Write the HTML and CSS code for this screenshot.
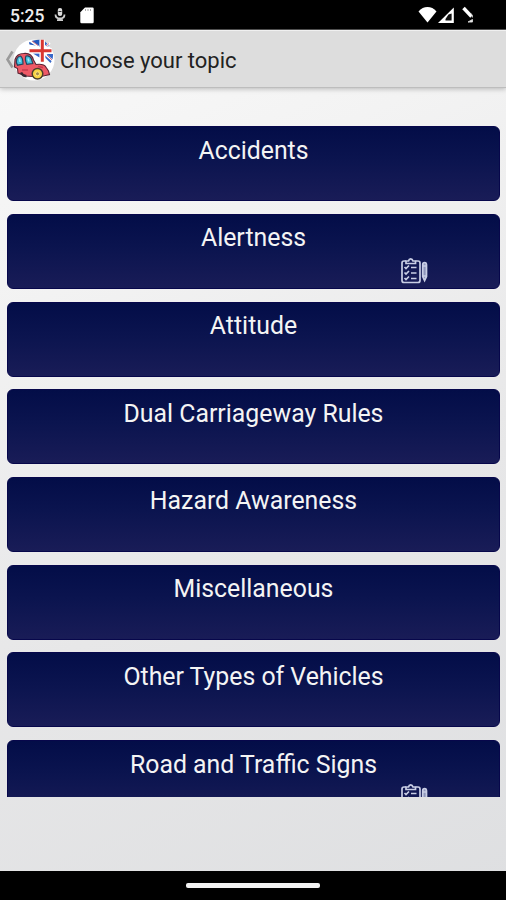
FILE: index.html
```html
<!DOCTYPE html>
<html lang="en">

<head>
    <meta charset="UTF-8">
    <meta name="viewport" content="width=device-width, initial-scale=1.0">
    <title>Choose your topic</title>
    <link rel="stylesheet" href="styles.css">
</head>

<body>
    <div class="screen">
        <div class="status-bar">
            <span class="clock">5:25</span>
            <svg class="mic-icon" width="12" height="16" viewBox="0 0 12 16">
                <rect x="3.8" y="0" width="4.4" height="8" rx="2" fill="#ddd" />
                <path d="M1.500 6.500c0 3 2 4 4.500 4s4.500-1 4.500-4M3 12.200h6" fill="none" stroke="#ccc" stroke-width="1.800" />
                <path d="M4.500 3.500h3" stroke="#333" />
            </svg>
            <svg class="card-icon" width="14" height="17" viewBox="0 0 14 17">
                <path d="M5 .5h7.500q1.200 0 1.200 1.200v13.300q0 1.200-1.200 1.200H1.500q-1.200 0-1.200-1.200V5.300z" fill="#fff" />
                <path d="M5.500 2v2M8 2v2M10.500 2v2" stroke="#aaa" />
            </svg>
            <svg class="signal-icons" width="58" height="18" viewBox="0 0 58 18">
                <path d="M.5 5.500C5.500-.4 13.500-.4 18.500 5.500L9.500 16.500z" fill="#fff" />
                <path d="M35.800 1.500v15.500H20z" fill="#fff" />
                <path d="M33.600 7.500v7h-6.100v-1.500l3-4.500z" fill="#111" />
                <path d="M45.500 2l8 8.500" stroke="#fff" stroke-width="3.400" />
                <path d="M53 7.500q2 2.500 1.300 4M50 16h4.500v-2.500z" fill="#fff" stroke="#ccc" stroke-width="1" />
            </svg>
        </div>

        <div class="header">
            <svg class="back" width="9" height="22" viewBox="0 0 9 22">
                <path d="M7.500 2.500L2.500 10.500l5 8" fill="none" stroke="#9a9a9a" stroke-width="2.600" />
            </svg>
            <svg class="logo" width="42" height="42" viewBox="0 0 42 42">
                <circle cx="21" cy="21" r="20.500" fill="#fff" />
                <!-- flag -->
                <path d="M16 3.500Q20 .7 26.500.7V8q-2-1-4-1.500l-6-1z" fill="#2558bd" />
                <path d="M32 2.500l4.500 4.500L32 8zM32 15l8 0q.5 5-2.500 9l-5-5zM20 14.500h6.500v4z" fill="#3767c8" />
                <path d="M17 2l9 6M40 22l-8-7M32 8l5-4" fill="none" stroke="#fff" stroke-width="2" />
                <path d="M19 2l6 4.500M34 16l5 5M33 7l3-2.500" stroke="#d87283" stroke-width="1" />
                <path d="M29.300.8v23M16 11.800h23" stroke="#fff" stroke-width="5" />
                <path d="M29.300.8v22M16.500 11.800h22" stroke="#d93631" stroke-width="3" />
                <!-- car -->
                <path d="M5 34L4.500 29.500 1.500 28 2 20.500Q4 14.500 10.500 14.500Q18.500 13.500 20.500 21l2.500 4.500q8-1 10 2.800l2.500 3.700 1 3.500-6 1.500-11 .5-7-.5z" fill="#ee5966" stroke="#5b2434" stroke-width="1.100" />
                <path d="M7.500 17q2.500 1.500 2.500 8l-5.500 1.200Q2.500 23 4 19.500 5.500 17 7.500 17zM13 17q4-1 5.500 3l1.300 4.500-6 .8Q11.500 20 13 17z" fill="#43bfdd" stroke="#27435c" stroke-width="1.200" />
                <path d="M6.500 19.500l.5 3.500M15 19.500l1 3" stroke="#a4e9f4" stroke-width="1.500" />
                <path d="M9 31h6M25 27.500l5 1" fill="none" stroke="#c63b50" stroke-width="1.300" />
                <path d="M8 33.500q2 4 5.500 3.500" fill="none" stroke="#3b2832" stroke-width="2.500" />
                <circle cx="24.500" cy="34.800" r="5.300" fill="#f9d344" stroke="#49402c" stroke-width="1.500" />
                <circle cx="24.500" cy="34.800" r="2" fill="#a58a4c" stroke="#ffe979" />
            </svg>
            <h1>Choose your topic</h1>
        </div>

        <div class="topic-list">
            <div class="topic">Accidents</div>
            <div class="topic">
                Alertness
                <svg class="checklist" width="28" height="28" viewBox="0 0 28 28">
                    <g fill="none" stroke="#c9cee5" stroke-width="1.700">
                        <path d="M6 4H4Q2 4 2 6v17.500q0 2 2 2h14q2 0 2-2V6q0-2-2-2H15.500" />
                        <path d="M6 6.500V4h2.500Q9 1.800 10.700 1.800T13 4h2.500v2.500z" />
                        <path d="M4.500 10l1.500 1.500 3-3M4.500 15.500L6 17l3-3M4.500 21L6 22.500l3-3M11 10.500h5.500M11 16h5.500M11 21.500h5.500" />
                        <path d="M22.700 8q0-2.500 1.900-2.500T26.500 8v11.500l-1.900 4-1.900-4zM22.500 9h4M22.500 19h4" fill="#8f96ba" />
                    </g>
                </svg>
            </div>
            <div class="topic">Attitude</div>
            <div class="topic">Dual Carriageway Rules</div>
            <div class="topic">Hazard Awareness</div>
            <div class="topic">Miscellaneous</div>
            <div class="topic">Other Types of Vehicles</div>
            <div class="topic">
                Road and Traffic Signs
                <svg class="checklist" width="28" height="28" viewBox="0 0 28 28">
                    <g fill="none" stroke="#c9cee5" stroke-width="1.700">
                        <path d="M6 4H4Q2 4 2 6v17.500q0 2 2 2h14q2 0 2-2V6q0-2-2-2H15.500" />
                        <path d="M6 6.500V4h2.500Q9 1.800 10.700 1.800T13 4h2.500v2.500z" />
                        <path d="M4.500 10l1.500 1.500 3-3M4.500 15.500L6 17l3-3M4.500 21L6 22.500l3-3M11 10.500h5.500M11 16h5.500M11 21.500h5.500" />
                        <path d="M22.700 8q0-2.500 1.900-2.500T26.500 8v11.500l-1.900 4-1.900-4zM22.500 9h4M22.500 19h4" fill="#8f96ba" />
                    </g>
                </svg>
            </div>
        </div>

        <div class="nav-bar">
            <div class="handle"></div>
        </div>
    </div>
</body>

</html>
```

FILE: styles.css
```css
body {
    font-family: Roboto, "Liberation Sans", sans-serif;
    margin: 0;
    padding: 0;
    background-color: #000;
}

.screen {
    display: flex;
    flex-direction: column;
    height: 900px;
    overflow: hidden;
    background: linear-gradient(155deg, #fafafa 0%, #f3f3f3 25%, #e7e7e8 60%, #dedfe1 100%);
}

/* Phone status bar */
.status-bar {
    display: flex;
    align-items: flex-start;
    box-sizing: border-box;
    height: 30px;
    padding: 6px 30px 0 10px;
    background-color: #000;
    border-bottom: 1px solid #555;
    color: #eee;
    flex-shrink: 0;
}

.clock {
    width: 35px;
    font-size: 17.5px;
    font-weight: 500;
    line-height: 20px;
}

.mic-icon {
    margin: 2px 0 0 9px;
}

.card-icon {
    margin: 1px 0 0 14px;
}

.signal-icons {
    margin-left: auto;
}

/* Title bar */
.header {
    display: flex;
    align-items: center;
    box-sizing: border-box;
    height: 58px;
    padding: 1px 0 0 5px;
    background-color: #dddddd;
    border-top: 1px solid #f0f0f0;
    border-bottom: 1px solid #bdbdbd;
    box-shadow: 0 1px 5px rgba(0, 0, 0, 0.25);
    flex-shrink: 0;
}

.logo {
    margin-left: -1px;
}

.header h1 {
    margin: 0 0 0 5px;
    padding-top: 2px;
    font-size: 22px;
    font-weight: 400;
    color: #222;
    white-space: nowrap;
}

/* Topics, last one is cut off by the scroll area */
.topic-list {
    display: flex;
    flex-direction: column;
    gap: 12.7px;
    height: 670.7px;
    margin: 38.3px 6px 0 7px;
    overflow: hidden;
    flex-shrink: 0;
}

.topic {
    position: relative;
    box-sizing: border-box;
    height: 75px;
    padding-top: 8.4px;
    border: 1px solid #07074b;
    border-radius: 6px;
    background: linear-gradient(#030d48, #0b144f 45%, #191c57);
    color: #f4f4f4;
    font-size: 24.85px;
    line-height: 30px;
    text-align: center;
    flex-shrink: 0;
}

.checklist {
    position: absolute;
    right: 71px;
    bottom: 3px;
}

/* Gesture bar */
.nav-bar {
    display: flex;
    justify-content: center;
    box-sizing: border-box;
    height: 29px;
    margin-top: auto;
    padding-top: 12px;
    background-color: #000;
    flex-shrink: 0;
}

.handle {
    width: 134px;
    height: 5px;
    border-radius: 2px;
    background-color: #f2f2f2;
}
```
